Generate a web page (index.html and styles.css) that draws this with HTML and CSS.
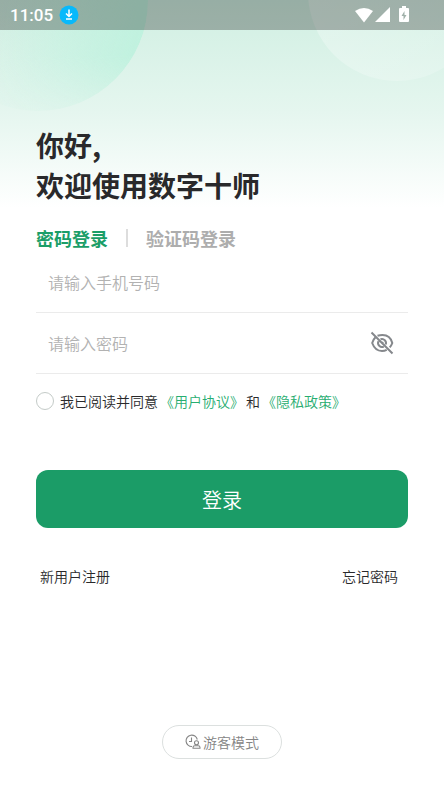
FILE: index.html
```html
<!DOCTYPE html>
<html lang="zh-CN">
<head>
<meta charset="utf-8">
<meta name="viewport" content="width=device-width, initial-scale=1">
<title>登录</title>
<link rel="stylesheet" href="styles.css">
</head>
<body>
<div class="page">
  <div class="orb orb-left"></div>
  <div class="orb orb-right"></div>
  <header class="status">
    <span class="clock">11:05</span>
    <svg class="download" viewBox="0 0 20 20" aria-hidden="true">
      <circle cx="10" cy="10" r="9.5" fill="#08b9fb"/>
      <path d="M10 4.500v7M7 8.500l3 3 3-3M7 14h6" fill="none" stroke="#fff" stroke-width="1.500"/>
    </svg>
    <svg class="signals" viewBox="0 0 56 18" aria-hidden="true" fill="#fff">
      <path d="M0 5Q9-1 18 5L9 16.500Z"/>
      <path d="M35 1v15H20Z"/>
      <path fill-rule="evenodd" d="M47 0h4v2h2q1 0 1 1v12q0 1-1 1h-8q-1 0-1-1V3q0-1 1-1h2ZM49.500 5L46.500 10h2v4l3-5h-2Z"/>
    </svg>
  </header>
  <main class="content">
    <h1 class="title">你好,<br>欢迎使用数字十师</h1>
    <nav class="tabs">
      <button type="button" class="tab active">密码登录</button>
      <span class="divider"></span>
      <button type="button" class="tab">验证码登录</button>
    </nav>
    <form>
      <div class="field">
        <input type="tel" aria-label="手机号码" placeholder="请输入手机号码">
      </div>
      <div class="field">
        <input type="password" aria-label="密码" placeholder="请输入密码">
        <button type="button" class="reveal" aria-label="显示密码">
          <svg viewBox="0 0 24 24" fill="none" stroke="#85888c" stroke-width="2">
            <path d="M7.500 4.800C9 4.300 10.500 4 12.500 4c4.800 0 8.500 3 9.800 8-.6 1.700-1.500 3.200-2.600 4.400M5.500 6.300C4 7.700 2.900 9.600 2.200 12 4 17 7.500 20 12 20c1.700 0 3.300-.4 4.700-1.200"/>
            <path d="M10.500 8.300a4 4 0 0 1 5.200 5.200M8.500 10.200a4 4 0 0 0 5.300 5.400M12 11.500a1.500 1.500 0 0 1 1 1M1.500 1.500l21 21"/>
          </svg>
        </button>
      </div>
      <div class="agreement">
        <input type="checkbox" id="agree">
        <label for="agree">我已阅读并同意</label>
        <a href="#terms">《用户协议》</a>
        <span>和</span>
        <a href="#privacy">《隐私政策》</a>
      </div>
      <button type="submit" class="submit">登录</button>
    </form>
    <div class="links">
      <a href="#register">新用户注册</a>
      <a href="#forgot">忘记密码</a>
    </div>
    <button type="button" class="guest">
      <svg viewBox="0 0 16 16" fill="none" stroke="#858585" stroke-width="1.100" aria-hidden="true">
        <path d="M7 12.500A5.700 5.700 0 1 1 12.300 5.500M6.500 3.500v4H4"/>
        <circle cx="11.500" cy="8.700" r="2"/>
        <path d="M8 14.300v-.8q0-1.800 1.800-1.800h3.400q1.800 0 1.800 1.800v.8Z"/>
      </svg>
      <span>游客模式</span>
    </button>
  </main>
</div>
</body>
</html>
```
FILE: styles.css
```css
* {
  box-sizing: border-box;
}

body {
  margin: 0;
  background: #fff;
  color: #29292b;
  font-family: "Noto Sans CJK SC", sans-serif;
  font-weight: 350;
}

button,
input {
  font: inherit;
}

button {
  padding: 0;
  border: 0;
  background: none;
  cursor: pointer;
}

a {
  color: inherit;
  text-decoration: none;
}

.page {
  position: relative;
  display: flex;
  flex-direction: column;
  min-height: 100vh;
  overflow: hidden;
  background: linear-gradient(#d0efe2, #e5f6ef 112px, #fff 208px);
}

.orb {
  position: absolute;
  border-radius: 50%;
}

.orb-left {
  top: -109px;
  left: -72px;
  width: 220px;
  height: 220px;
  background: linear-gradient(100deg, rgba(190, 242, 223, 0) 35%, rgba(190, 242, 223, 0.5) 65%, #bff1de 95%);
  mask-image: linear-gradient(#000 75%, rgba(0, 0, 0, 0.3));
}

.orb-right {
  top: -97px;
  right: -42px;
  width: 178px;
  height: 178px;
  background: linear-gradient(100deg, rgba(255, 255, 255, 0.3), rgba(255, 255, 255, 0.15));
}

.status {
  position: relative;
  display: flex;
  align-items: center;
  height: 30px;
  padding: 0 33px 0 10px;
  background: rgba(0, 0, 0, 0.27);
  color: #fff;
}

.clock {
  font: 500 17px/30px Roboto, sans-serif;
}

.download {
  width: 20px;
  height: 20px;
  margin-left: 6px;
}

.signals {
  width: 56px;
  height: 18px;
  margin-left: auto;
}

.content {
  position: relative;
  display: flex;
  flex: 1;
  flex-direction: column;
  padding: 95px 36px 30px;
}

.title {
  margin: 0;
  font-size: 28px;
  font-weight: 700;
  line-height: 40px;
}

.tabs {
  display: flex;
  align-items: center;
  height: 28px;
  margin-top: 19px;
}

.tab {
  color: #adadad;
  font-size: 18px;
  font-weight: 700;
  line-height: 28px;
}

.tab.active {
  color: #1b9e68;
}

.divider {
  width: 2px;
  height: 18px;
  margin: 0 18px;
  background: #ddd;
}

.field {
  display: flex;
  align-items: center;
  height: 61px;
  padding: 0 14px 0 12px;
  border-bottom: 1px solid #ebebeb;
}

.field input {
  flex: 1;
  min-width: 0;
  padding: 0;
  border: 0;
  outline: 0;
  background: none;
  font-size: 16px;
}

.field input::placeholder {
  color: #b2b2b2;
}

.reveal,
.reveal svg {
  display: block;
  width: 24px;
  height: 24px;
}

.agreement {
  display: flex;
  align-items: center;
  height: 24px;
  margin-top: 15px;
  font-size: 14px;
}

.agreement input {
  width: 18px;
  height: 18px;
  margin: 0 6px 0 0;
  border: 1px solid #c4cbc8;
  border-radius: 50%;
  background: #fff;
  appearance: none;
}

.agreement input:checked {
  background: #1b9e68;
}

.agreement a {
  margin: 0 2px;
  color: #27ad70;
}

.submit {
  display: block;
  width: 100%;
  height: 58px;
  margin-top: 57px;
  border-radius: 12px;
  background: #1b9c67;
  color: #fff;
  font-size: 20px;
}

.links {
  display: flex;
  justify-content: space-between;
  margin-top: 38px;
  padding: 0 10px 0 4px;
  font-size: 14px;
  line-height: 20px;
}

.guest {
  display: flex;
  align-items: center;
  align-self: center;
  justify-content: center;
  gap: 2px;
  height: 34px;
  margin-top: auto;
  padding: 0 22px;
  border: 1px solid #dce0df;
  border-radius: 17px;
  color: #858585;
  font-size: 14px;
}

.guest svg {
  width: 16px;
  height: 16px;
}
```
